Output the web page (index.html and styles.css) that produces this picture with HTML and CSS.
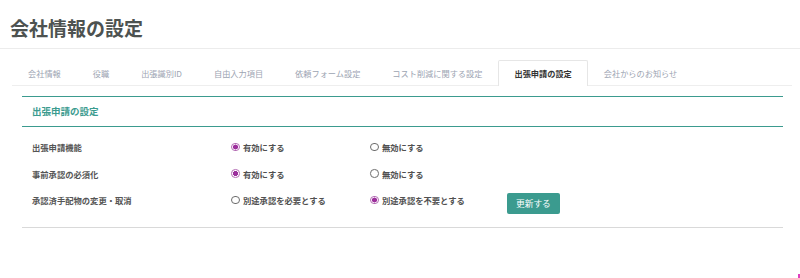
FILE: index.html
```html
<!DOCTYPE html>
<html lang="ja">
<head>
  <meta charset="utf-8">
  <title>会社情報の設定</title>
  <link rel="stylesheet" href="styles.css">
</head>
<body>
  <header class="page-header">
    <h1>会社情報の設定</h1>
  </header>

  <div class="content">
    <ul class="tabs">
      <li class="tab">会社情報</li>
      <li class="tab">役職</li>
      <li class="tab">出張識別ID</li>
      <li class="tab">自由入力項目</li>
      <li class="tab">依頼フォーム設定</li>
      <li class="tab">コスト削減に関する設定</li>
      <li class="tab active">出張申請の設定</li>
      <li class="tab">会社からのお知らせ</li>
    </ul>

    <section class="panel">
      <h2 class="panel-title">出張申請の設定</h2>
      <form class="panel-body">
        <div class="row">
          <span class="row-label">出張申請機能</span>
          <label class="radio"><input type="radio" name="apply" checked><span class="dot"></span>有効にする</label>
          <label class="radio"><input type="radio" name="apply"><span class="dot"></span>無効にする</label>
        </div>
        <div class="row">
          <span class="row-label">事前承認の必須化</span>
          <label class="radio"><input type="radio" name="pre" checked><span class="dot"></span>有効にする</label>
          <label class="radio"><input type="radio" name="pre"><span class="dot"></span>無効にする</label>
        </div>
        <div class="row">
          <span class="row-label">承認済手配物の変更・取消</span>
          <label class="radio"><input type="radio" name="change"><span class="dot"></span>別途承認を必要とする</label>
          <label class="radio"><input type="radio" name="change" checked><span class="dot"></span>別途承認を不要とする</label>
          <button type="submit" class="btn">更新する</button>
        </div>
      </form>
    </section>
  </div>

  <span class="corner-mark"></span>
</body>
</html>
```

FILE: styles.css
```css
body {
  margin: 0;
  font-family: "Noto Sans CJK JP", "Noto Sans", sans-serif;
  color: #555;
  background: #fff;
}
.page-header {
  height: 48px;
  padding: 0 10px;
  border-bottom: 1px solid #ececec;
}
.page-header h1 {
  margin: 0;
  padding-top: 15px;
  font-size: 19px;
  line-height: 25px;
  font-weight: bold;
  color: #4d5250;
}
.content {
  margin: 0 8px 0 12px;
}
.tabs {
  display: flex;
  list-style: none;
  margin: 11px 0 0;
  padding: 0;
  border-bottom: 1px solid #eee;
}
.tab {
  height: 24px;
  padding: 0 15px;
  border: 1px solid transparent;
  border-bottom: none;
  font-size: 8.2px;
  line-height: 24px;
  color: #9ca4b2;
  border-radius: 2px 2px 0 0;
}
.tab.active {
  border-color: #e6e6e6;
  background: #fff;
  color: #333;
  font-weight: bold;
  margin-bottom: -1px;
  height: 25px;
}
.panel {
  margin: 10px 9px 0 10px;
  border-top: 1px solid #3b9b8f;
  border-bottom: 1px solid #d9d9d9;
}
.panel-title {
  margin: 0;
  padding: 0 10px;
  height: 29px;
  line-height: 29px;
  font-size: 9.5px;
  font-weight: bold;
  color: #3b9b8f;
  border-bottom: 1px solid #3b9b8f;
}
.panel-body {
  padding: 12px 10px 13px;
}
.row {
  display: grid;
  grid-template-columns: 199px 139px 137px auto;
  align-items: start;
  margin-bottom: 10.5px;
  font-size: 8.3px;
  line-height: 16px;
}
.row:last-child {
  margin-bottom: 0;
}
.row-label {
  font-weight: bold;
  color: #555;
}
.radio {
  display: flex;
  align-items: center;
  height: 16px;
  color: #505050;
  font-weight: bold;
}
.radio input {
  display: none;
}
.dot {
  box-sizing: border-box;
  width: 8.5px;
  height: 8.5px;
  margin-right: 3.5px;
  border: 1px solid #6d6d6d;
  border-radius: 50%;
  background: #fff;
}
.radio input:checked + .dot {
  border-color: #b36bb3;
  background: radial-gradient(circle, #9c2f9c 0 2.3px, #fff 2.7px);
}
.btn {
  justify-self: start;
  margin-top: 1px;
  height: 21px;
  padding: 0 9px;
  border: none;
  border-radius: 2px;
  background: #3b9b8f;
  color: #fff;
  font-family: inherit;
  font-size: 8.7px;
  cursor: pointer;
}
.corner-mark {
  position: fixed;
  right: 0;
  bottom: 0;
  width: 2px;
  height: 4px;
  background: #e040c0;
}
```
